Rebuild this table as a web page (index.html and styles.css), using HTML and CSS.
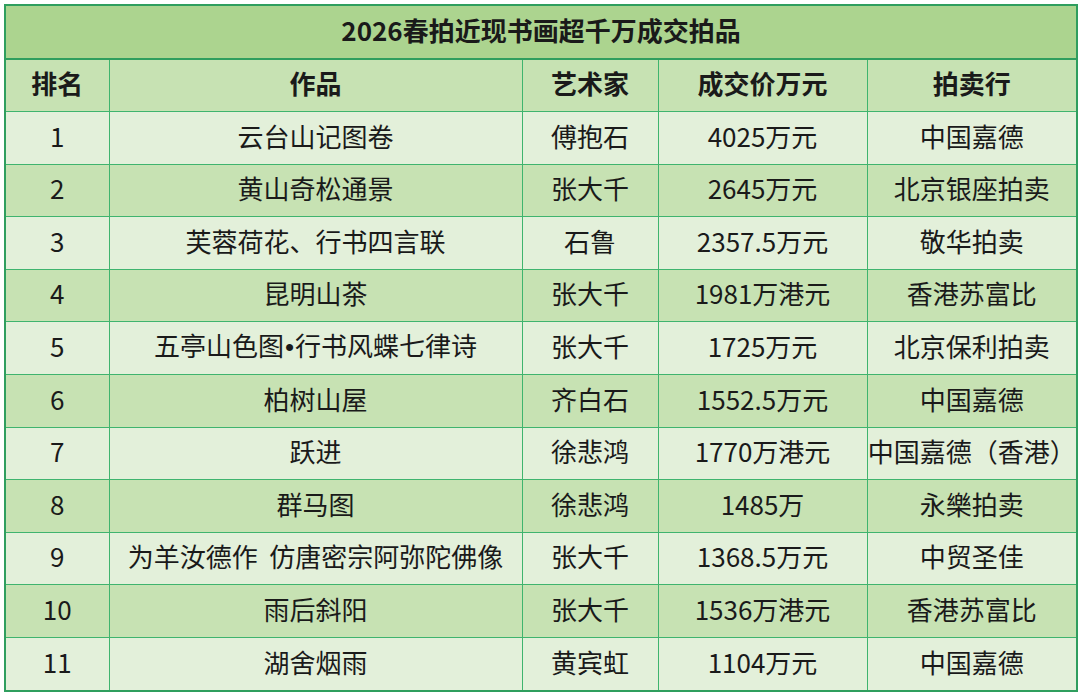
FILE: index.html
```html
<!DOCTYPE html>
<html lang="zh">
<head>
<meta charset="utf-8">
<link rel="stylesheet" href="styles.css">
</head>
<body>
<table class="sheet">
  <colgroup>
    <col class="c-rank"><col class="c-work"><col class="c-artist"><col class="c-price"><col class="c-house">
  </colgroup>
  <thead>
    <tr class="title"><th colspan="5">2026春拍近现书画超千万成交拍品</th></tr>
    <tr class="head"><th>排名</th><th>作品</th><th>艺术家</th><th>成交价万元</th><th>拍卖行</th></tr>
  </thead>
  <tbody>
    <tr class="odd"><td>1</td><td>云台山记图卷</td><td>傅抱石</td><td>4025万元</td><td>中国嘉德</td></tr>
    <tr class="even"><td>2</td><td>黄山奇松通景</td><td>张大千</td><td>2645万元</td><td>北京银座拍卖</td></tr>
    <tr class="odd"><td>3</td><td>芙蓉荷花、行书四言联</td><td>石鲁</td><td>2357.5万元</td><td>敬华拍卖</td></tr>
    <tr class="even"><td>4</td><td>昆明山茶</td><td>张大千</td><td>1981万港元</td><td>香港苏富比</td></tr>
    <tr class="odd"><td>5</td><td>五亭山色图<span class="dot">•</span>行书风蝶七律诗</td><td>张大千</td><td>1725万元</td><td>北京保利拍卖</td></tr>
    <tr class="even"><td>6</td><td>柏树山屋</td><td>齐白石</td><td>1552.5万元</td><td>中国嘉德</td></tr>
    <tr class="odd"><td>7</td><td>跃进</td><td>徐悲鸿</td><td>1770万港元</td><td>中国嘉德（香港）</td></tr>
    <tr class="even"><td>8</td><td>群马图</td><td>徐悲鸿</td><td>1485万</td><td>永樂拍卖</td></tr>
    <tr class="odd"><td>9</td><td>为羊汝德作&nbsp;&nbsp;仿唐密宗阿弥陀佛像</td><td>张大千</td><td>1368.5万元</td><td>中贸圣佳</td></tr>
    <tr class="even"><td>10</td><td>雨后斜阳</td><td>张大千</td><td>1536万港元</td><td>香港苏富比</td></tr>
    <tr class="odd"><td>11</td><td>湖舍烟雨</td><td>黄宾虹</td><td>1104万元</td><td>中国嘉德</td></tr>
  </tbody>
</table>
</body>
</html>
```

FILE: styles.css
```css
html, body {
  margin: 0;
  padding: 0;
  background: #ffffff;
}
body {
  padding: 4px 4px 0 4px;
  font-family: "Noto Sans CJK SC", "Noto Sans", sans-serif;
  color: #1a1a1a;
}
.sheet {
  width: 1072px;
  border-collapse: collapse;
  table-layout: fixed;
  border: 2px solid #2f9e5e;
}
.c-rank { width: 104px; }
.c-work { width: 413px; }
.c-artist { width: 136px; }
.c-price { width: 209px; }
.c-house { width: 210px; }
.sheet th, .sheet td {
  border: 1px solid #3fb46e;
  text-align: center;
  vertical-align: middle;
  padding: 0 0 5px 0;
  font-size: 26px;
  line-height: 1.2;
  white-space: nowrap;
  overflow: hidden;
}
.sheet td {
  height: 46.6px;
  font-weight: 400;
}
.title th {
  height: 47px;
  background: #acd48f;
  font-weight: 700;
  border-bottom: 2px solid #2f9e5e;
}
.head th {
  height: 46px;
  background: #c7e2b3;
  font-weight: 700;
}
.odd td { background: #e3f0da; }
.even td { background: #c7e2b3; }
.dot {
  font-family: "Liberation Sans", sans-serif;
  padding: 0 1px;
}
```
